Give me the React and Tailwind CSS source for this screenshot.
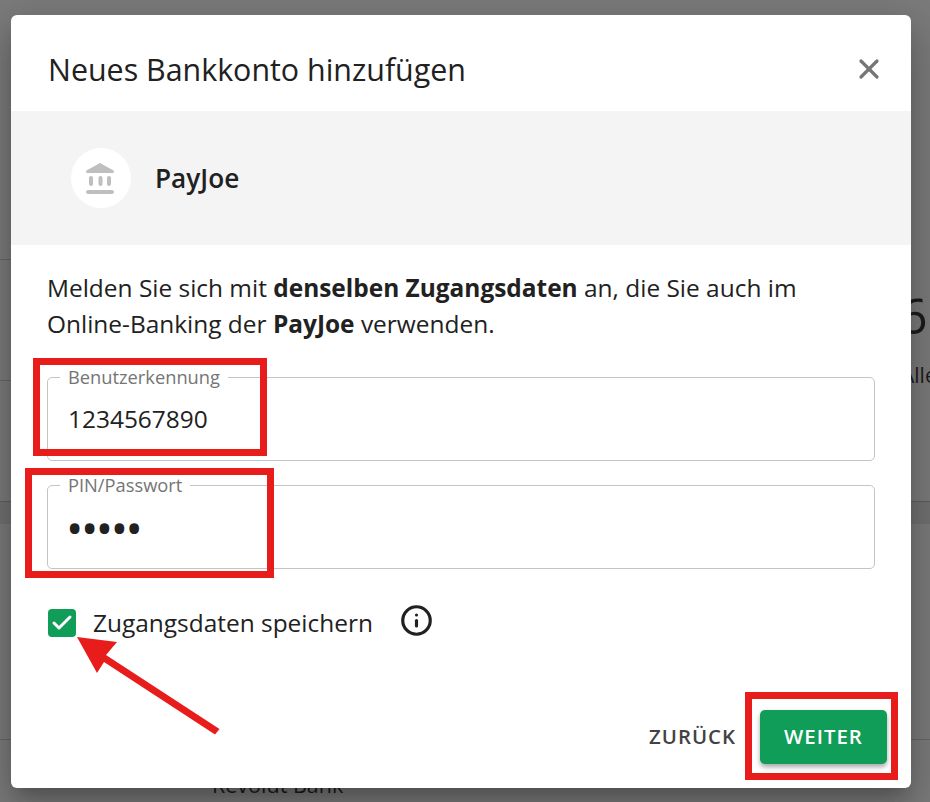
import React from 'react';
import { X, Check, Info } from 'lucide-react';

const font = { fontFamily: '"Open Sans", sans-serif' };

function BankIcon() {
    return (
        <svg width="28" height="31" viewBox="0 0 28 31" fill="#bfbfbf" className="mr-[2px]">
            <path d="M14 0 L27.5 7.5 Q28.5 10 27 10 L1 10 Q-.5 10 .5 7.5 Z" />
            <rect x="3" y="13" width="4" height="10" rx="2" />
            <rect x="12.5" y="13" width="4" height="10" rx="2" />
            <rect x="21" y="13" width="4" height="10" rx="2" />
            <rect x="0" y="27" width="28" height="4" rx="2" />
        </svg>
    );
}

function Field({ label, children }) {
    return (
        <fieldset className="h-[92px] border border-[#c4c4c4] rounded-[5px] px-[20px]">
            <legend className="-ml-[8px] px-[8px] text-[18.3px] leading-[16px] text-[#757575]">{label}</legend>
            {children}
        </fieldset>
    );
}

function App() {
    return (
        <div className="relative w-[930px] h-[802px] overflow-hidden bg-[#7b7b7b]" style={font}>
            {/* page behind the dialog */}
            <div className="absolute left-0 top-[259px] w-[11px] h-px bg-[#666666]"></div>
            <div className="absolute left-0 top-[380px] w-[11px] h-px bg-[#666666]"></div>
            <div className="absolute left-0 right-0 top-[501px] h-[23px] border-t border-[#5f5f5f] bg-[#717171]"></div>
            <div className="absolute left-0 right-0 top-[739px] h-px bg-[#666666]"></div>
            <div className="absolute left-[899px] top-[280px] text-[50px] leading-[70px] text-[#1c1c1c]">6</div>
            <div className="absolute left-[901px] top-[361px] text-[21px] leading-[28px] text-[#1c1c1c]">Alle</div>
            <div className="absolute left-[212px] top-[771px] text-[21.5px] leading-[28px] text-[#1c1c1c]">Revolut Bank</div>

            {/* dialog */}
            <div className="absolute left-[11px] top-[15px] w-[900px] h-[773px] bg-white rounded-[6px] flex flex-col text-[#212121] shadow-[0_11px_15px_-7px_rgba(0,0,0,0.2),0_24px_38px_3px_rgba(0,0,0,0.14),0_9px_46px_8px_rgba(0,0,0,0.12)]">
                <div className="h-[96px] flex items-center justify-between pl-[37px] pr-[26px] pt-[14px] shrink-0">
                    <h2 className="text-[30.4px] font-medium leading-[40px]">Neues Bankkonto hinzufügen</h2>
                    <X size={32} strokeWidth={2.4} className="text-[#757575] -mt-[2px]" />
                </div>
                <div className="h-[134px] bg-[#f4f4f4] flex items-center pl-[60px] gap-[24px] shrink-0">
                    <div className="w-[60px] h-[60px] rounded-full bg-white flex items-center justify-center">
                        <BankIcon />
                    </div>
                    <div className="text-[26.2px] font-semibold leading-[34px]">PayJoe</div>
                </div>
                <div className="flex-1 flex flex-col px-[36px] pt-[25px]">
                    <p className="text-[24.45px] leading-[36px]">
                        Melden Sie sich mit <b className="font-bold">denselben Zugangsdaten</b> an, die Sie auch im Online-Banking der <b className="font-bold">PayJoe</b> verwenden.
                    </p>
                    <div className="mt-[27px] flex flex-col gap-[16px]">
                        <Field label="Benutzerkennung">
                            <div className="text-[24.45px] leading-[34px] mt-[17px]">1234567890</div>
                        </Field>
                        <Field label="PIN/Passwort">
                            <div className="text-[46px] leading-[34px] mt-[17px] -ml-[2px] tracking-[-2.4px]">•••••</div>
                        </Field>
                    </div>
                    <div className="flex items-center mt-[37px] ml-[1px]">
                        <div className="w-[28px] h-[28px] bg-[#0f9d58] rounded-[4px] flex items-center justify-center">
                            <Check size={24} strokeWidth={3} className="text-white" />
                        </div>
                        <span className="ml-[17px] text-[24.45px] leading-[34px]">Zugangsdaten speichern</span>
                        <Info size={33} strokeWidth={2.3} className="ml-[27px] -mt-[6px]" />
                    </div>
                    <div className="flex items-center justify-end mt-auto mb-[24px] -mr-[12px] gap-[24px]">
                        <span className="text-[20.4px] font-semibold tracking-[1px] text-[#424242] pb-[2px]">ZURÜCK</span>
                        <button className="w-[127px] h-[54px] rounded-[5px] bg-[#0f9d58] text-white text-[20.4px] font-semibold tracking-[1px] pb-[2px] shadow-[0_3px_5px_rgba(0,0,0,0.35)]">WEITER</button>
                    </div>
                </div>
            </div>

            {/* red annotations */}
            <div className="absolute left-[33px] top-[358px] w-[234px] h-[98px] border-[7px] border-[#e91c1c]"></div>
            <div className="absolute left-[25px] top-[468px] w-[249px] h-[110px] border-[7px] border-[#e91c1c]"></div>
            <div className="absolute left-[745px] top-[692px] w-[153px] h-[88px] border-[7px] border-[#e91c1c]"></div>
            <svg className="absolute left-0 top-0" width="930" height="802">
                <polygon points="77,637 117,642 106,655 219.5,729 215,734.5 104,662 97,673" fill="#e91c1c" />
            </svg>
        </div>
    );
}

export default App;
